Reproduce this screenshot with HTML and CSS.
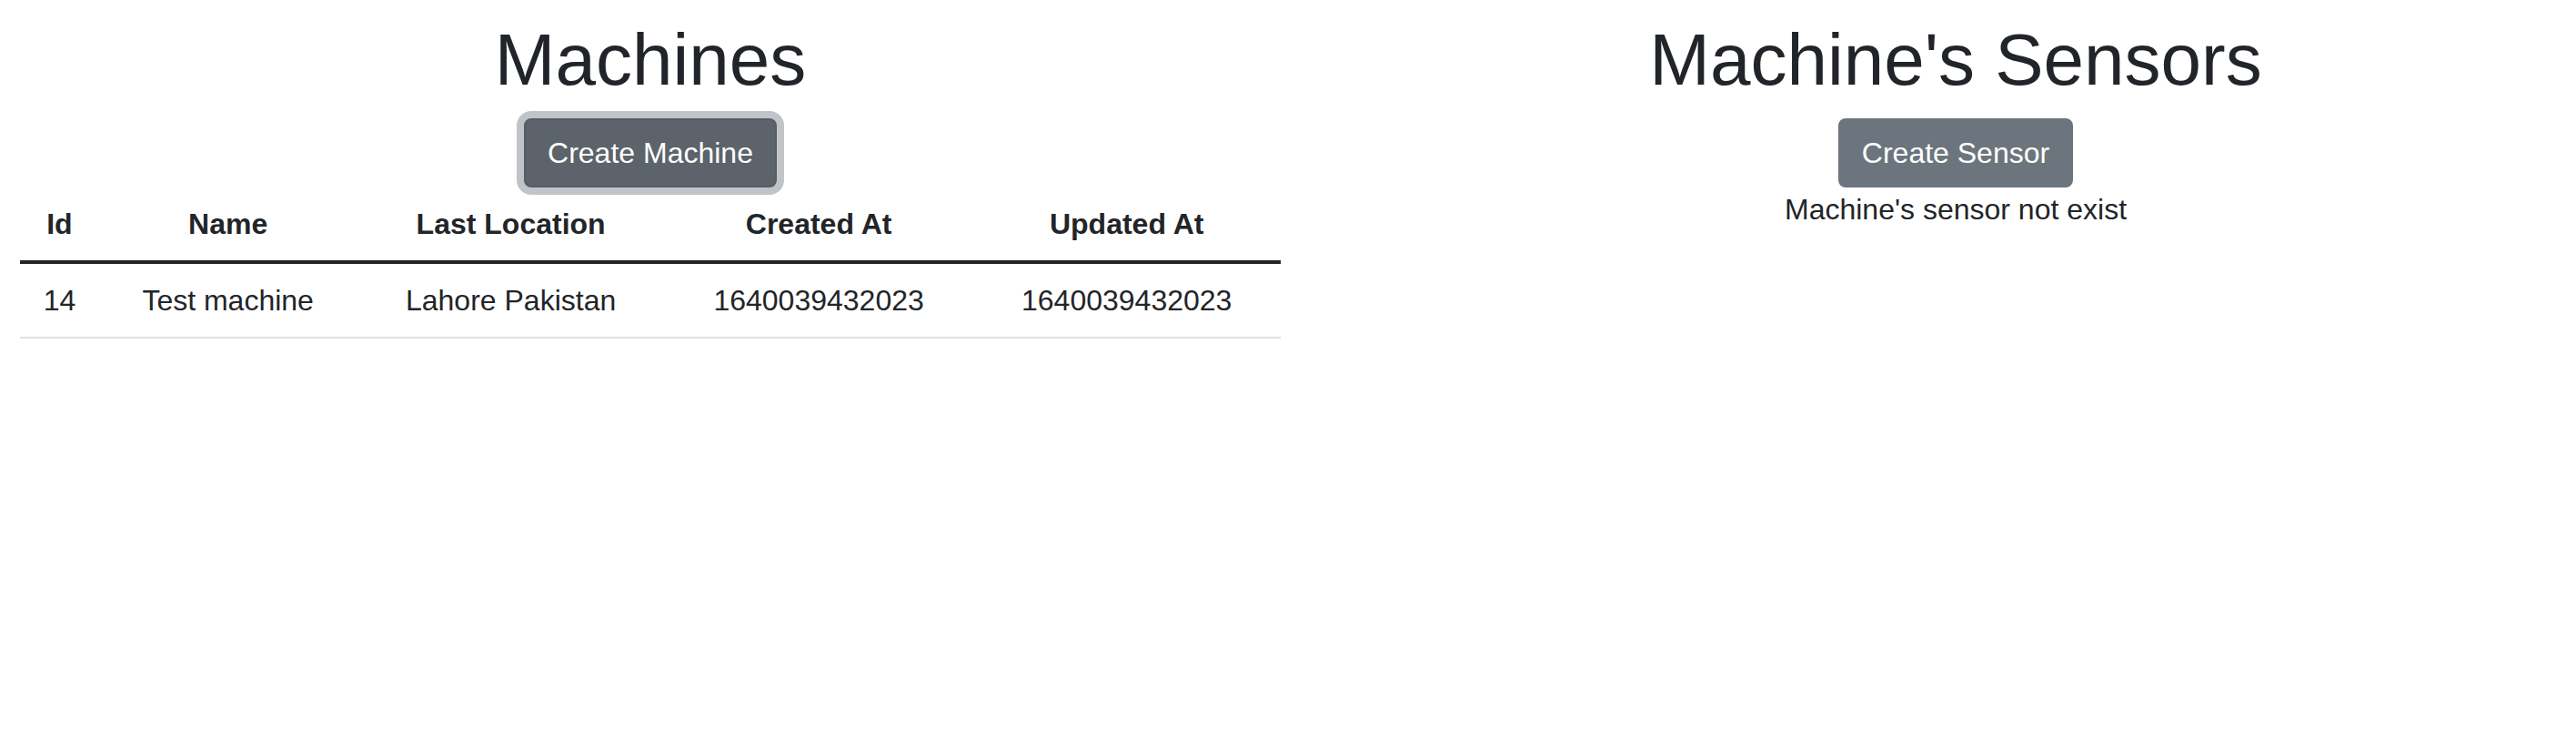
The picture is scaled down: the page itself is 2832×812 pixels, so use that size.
FILE: index.html
```html
<!DOCTYPE html>
<html lang="en">
<head>
<meta charset="utf-8">
<title>Machines</title>
<link rel="stylesheet" href="styles.css">
</head>
<body>
<div class="page">
  <section class="panel">
    <h1 class="title">Machines</h1>
    <button class="btn btn-focused" type="button">Create Machine</button>
    <table class="data-table">
      <thead>
        <tr>
          <th>Id</th>
          <th>Name</th>
          <th>Last Location</th>
          <th>Created At</th>
          <th>Updated At</th>
        </tr>
      </thead>
      <tbody>
        <tr>
          <td>14</td>
          <td>Test machine</td>
          <td>Lahore Pakistan</td>
          <td>1640039432023</td>
          <td>1640039432023</td>
        </tr>
      </tbody>
    </table>
  </section>
  <section class="panel">
    <h1 class="title">Machine's Sensors</h1>
    <button class="btn btn-secondary" type="button">Create Sensor</button>
    <div class="empty-note">Machine's sensor not exist</div>
  </section>
</div>
</body>
</html>
```

FILE: styles.css
```css
html, body {
  margin: 0;
  background: #fff;
}

body {
  font-family: "Liberation Sans", Arial, Helvetica, sans-serif;
  font-size: 32px;
  line-height: 1.5;
  color: #212529;
}

.page {
  display: grid;
  grid-template-columns: 1386px 1fr;
  column-gap: 60px;
  padding: 18px 0 0 22px;
}

.panel {
  text-align: center;
}

.title {
  font-size: 80px;
  font-weight: 500;
  line-height: 1.2;
  margin: 0 0 16px;
}

.btn {
  display: inline-block;
  font-family: inherit;
  font-size: 32px;
  line-height: 48px;
  font-weight: 400;
  color: #fff;
  padding: 12px 24px;
  border: 2px solid transparent;
  border-radius: 8px;
  vertical-align: middle;
  margin: 0;
  cursor: pointer;
}

.btn-secondary {
  background: #6c757d;
  border-color: #6c757d;
}

.btn-focused {
  background: #5c636a;
  border-color: #565e64;
  box-shadow: 0 0 0 8px rgba(130, 138, 145, 0.5);
}

.data-table {
  width: 100%;
  border-collapse: collapse;
  margin-bottom: 32px;
  color: #212529;
}

.data-table th,
.data-table td {
  padding: 16px;
  text-align: center;
}

.data-table thead {
  vertical-align: bottom;
}

.data-table th {
  font-weight: 700;
  border-bottom: 4px solid #212529;
}

.data-table td {
  border-bottom: 2px solid #dee2e6;
}

.empty-note {
  text-align: center;
}
```
